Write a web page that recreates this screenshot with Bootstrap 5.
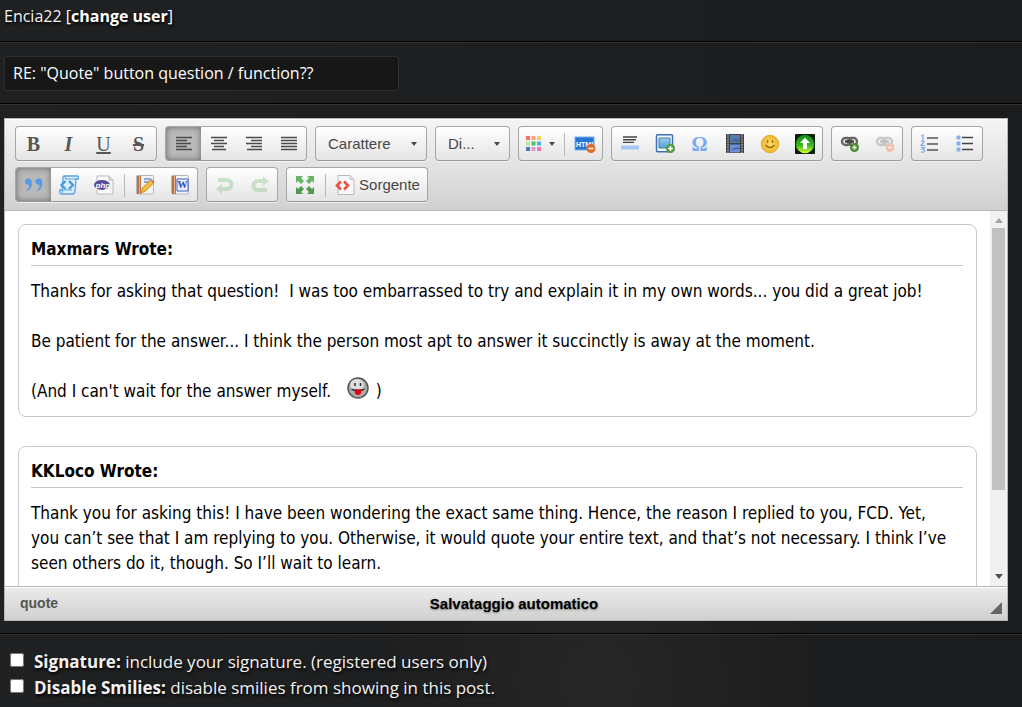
<!DOCTYPE html>
<html lang="it">
<head>
<meta charset="utf-8">
<meta name="viewport" content="width=device-width, initial-scale=1">
<title>Reply</title>
<link href="https://cdn.jsdelivr.net/npm/bootstrap@5.3.0/dist/css/bootstrap.min.css" rel="stylesheet">
<style>
body{background:radial-gradient(circle at 600px 680px,#282627 0,rgba(30,30,30,0) 220px),linear-gradient(90deg,#202122,#1b1c1d);color:#f2f2f2;font-family:"Open Sans","Noto Sans",sans-serif;font-size:16px;line-height:26px;min-height:100vh}
.post-row{border-bottom:1px solid #000;box-shadow:0 1px 0 #343434;padding:14px 14px 12px 4px}
.user-row{padding-top:3px;padding-bottom:12px;font-size:16px;text-shadow:1px 2px 3px #000}
.user-row a{color:#fff;text-decoration:none}
.subject{width:395px;max-width:100%;height:35px;background:#171717;border:1px solid #2e2e2e;border-radius:3px;color:#fff;padding:0 8px 2px;font-size:16px}
.editor{border:1px solid #b6b6b6;background:#fff;font-family:"Liberation Sans",sans-serif;color:#474747}
.tools{background:linear-gradient(#f5f5f5,#cfd1cf);border-bottom:1px solid #b6b6b6;padding:7px 10px 8px;gap:6px 8px;box-shadow:inset 0 1px 0 #fff}
.tool-set{display:flex;align-items:stretch;height:35px;border:1px solid #a6a6a6;border-bottom-color:#979797;border-radius:4px;background:linear-gradient(#fff,#e4e4e4);box-shadow:0 1px 0 rgba(255,255,255,.6);overflow:hidden}
.tool-set button{width:35px;border:0;padding:0;background:none;color:#474747;font-size:15px;display:flex;align-items:center;justify-content:center}
.tool-set button svg{width:20px;height:20px;flex:none}
.tool-set button.pressed{background:#b9b9b9;box-shadow:inset 0 0 6px rgba(0,0,0,.45)}
.tool-set button.faded svg{opacity:.3}
.tool-set button.color-tool{width:42px;gap:7px}
.tool-set button.color-tool svg{width:16px}
.tool-set button.source-tool{width:99px;gap:4px}
.tool-set .divide{width:1px;margin:6px 2px 4px 3px;background:#b9b9b9}
.caret-mark{border:3px solid transparent;border-top:4px solid #474747;border-bottom:0}
.glyph{font-family:"Liberation Serif",serif;font-size:20px;line-height:20px;color:#565656}
.glyph.omega{color:#79aaf1;font-weight:700}
.combo{position:relative}
.combo select{appearance:none;border:0;background:none;color:#474747;font-size:15px;padding:0 0 0 12px;width:110px}
.combo.short select{width:73px}
.combo .caret-mark{position:absolute;right:9px;top:15px;pointer-events:none}
.edit-area{height:375px}
.page-text{overflow:hidden;padding:13px;outline:0;color:#000;font-family:"DejaVu Sans Condensed","Noto Sans",sans-serif;font-size:17px;line-height:25px}
.quote-box{border:1px solid #c8c8c8;border-radius:8px;padding:12px 13px 12px 12px;margin-bottom:29px}
.quote-box h2{font-size:17px;font-weight:700;line-height:25px;margin:0 0 13px;padding-bottom:3px;border-bottom:1px solid #c8c8c8}
.quote-box p{margin:0 0 25px;padding-right:8px}
.quote-box p:last-child{margin:0}
.smiley{width:22px;height:22px;vertical-align:-2px;margin:-4px 2px 0 6px}
.scroller{width:17px;background:#f1f1f1;flex:none;padding:7px 2px 7px}
.scroller .thumb{width:13px;height:262px;background:#c1c1c1;margin-top:5px}
.scroller svg{width:8px;height:5px}
.status{height:34px;border-top:1px solid #b6b6b6;background:linear-gradient(#ebebeb,#cfd1cf);padding:0 5px 0 15px;box-shadow:inset 0 1px 0 #fff;font-weight:700;font-size:14px;line-height:34px}
.status .saved{color:#000;font-size:15px;padding-right:20px;text-shadow:0 1px 2px #777}
.status .path{color:#555;text-decoration:none;line-height:32px}
.status svg{width:12px;height:12px;margin:0 0 6px}
.options{padding:15px 10px;font-size:17px;text-shadow:1px 2px 3px #000}
.options label{display:flex;align-items:center;gap:10px;height:26px}
.options input{width:14px;height:14px;margin:0 0 4px;flex:none}
</style>
</head>
<body>
<svg width="0" height="0" class="position-absolute" aria-hidden="true">
<defs>
<linearGradient id="sky" x2="0" y2="1"><stop stop-color="#9bd0ef"/><stop offset="1" stop-color="#4fa0d8"/></linearGradient>
<linearGradient id="leaf" x2="0" y2="1"><stop stop-color="#118a1c"/><stop offset=".55" stop-color="#35b51d"/><stop offset="1" stop-color="#d8ff32"/></linearGradient>
<radialGradient id="sun"><stop stop-color="#ffe36a"/><stop offset="1" stop-color="#eeb52c"/></radialGradient>
<g id="chain" fill="none" stroke="#666" stroke-width="2.4"><rect x="2" y="4" width="9" height="7" rx="3.5"/><rect x="8" y="4" width="9" height="7" rx="3.5"/><path d="M5 7.500h9" stroke="#444"/></g>
<g id="notebook"><rect x="1.500" y=".5" width="17" height="18.500" rx="1" fill="#f2f3f8" stroke="#b1b5c2"/><path d="M2 1h4v18H2z" fill="#bd7348"/><path d="M4.500 1v18" stroke="#e6ae87"/></g>
</defs>
</svg>
<form>
<div class="post-row user-row">Encia22 <a href="#">[<b>change user</b>]</a></div>
<div class="post-row d-flex"><input class="subject" type="text" aria-label="Subject" value='RE: "Quote" button question / function??'></div>
<div class="post-row">
<div class="editor">
<div class="tools d-flex flex-wrap">
<div class="tool-set">
<button type="button" aria-label="Bold"><span class="glyph fw-bold">B</span></button>
<button type="button" aria-label="Italic"><span class="glyph fw-bold fst-italic">I</span></button>
<button type="button" aria-label="Underline"><span class="glyph text-decoration-underline">U</span></button>
<button type="button" aria-label="Strike"><span class="glyph fw-bold text-decoration-line-through">S</span></button>
</div>
<div class="tool-set">
<button type="button" class="pressed" aria-label="Left"><svg viewBox="0 0 20 20"><path d="M2 3.500h16M2 6.500h11M2 9.500h15M2 12.500h11M2 15.500h16" stroke="#4a4a4a" stroke-width="1.500"/></svg></button>
<button type="button" aria-label="Center"><svg viewBox="0 0 20 20"><path d="M2 3.500h16M5 6.500h10M2 9.500h16M5 12.500h10M3 15.500h14" stroke="#4a4a4a" stroke-width="1.500"/></svg></button>
<button type="button" aria-label="Right"><svg viewBox="0 0 20 20"><path d="M2 3.500h16M7 6.500h11M2 9.500h16M7 12.500h11M3 15.500h15" stroke="#4a4a4a" stroke-width="1.500"/></svg></button>
<button type="button" aria-label="Justify"><svg viewBox="0 0 20 20"><path d="M2 3.500h16M2 6.500h16M2 9.500h16M2 12.500h16M2 15.500h16" stroke="#4a4a4a" stroke-width="1.500"/></svg></button>
</div>
<div class="tool-set combo"><select aria-label="Carattere"><option>Carattere</option></select><span class="caret-mark"></span></div>
<div class="tool-set combo short"><select aria-label="Dimensione"><option>Di...</option></select><span class="caret-mark"></span></div>
<div class="tool-set">
<button type="button" class="color-tool" aria-label="Color"><svg viewBox="0 0 16 20"><path fill="#f56f6b" d="M0 2h4v4H0z"/><path fill="#f8a36d" d="M5.500 2h4v4h-4z"/><path fill="#efd35d" d="M11 2h4v4h-4z"/><path fill="#bfe5a0" d="M0 7.500h4v4H0z"/><path fill="#45c957" d="M5.500 7.500h4v4h-4z"/><path fill="#4eb0ef" d="M11 7.500h4v4h-4z"/><path fill="#5572b1" d="M0 13h4v4H0z"/><path fill="#d899dc" d="M5.500 13h4v4h-4z"/><path fill="#fb73b2" d="M11 13h4v4h-4z"/></svg><span class="caret-mark"></span></button>
<span class="divide"></span>
<button type="button" aria-label="Remove format"><svg viewBox="0 0 20 20" overflow="visible"><rect x="0" y="3" width="19" height="13" fill="#2874d4" stroke="#7bb2ed"/><text x="1" y="12.500" font-size="7" font-weight="bold" fill="#fff" font-family="Liberation Sans">HTML</text><circle cx="16" cy="14.500" r="4.500" fill="#e36a20"/><path d="M13.500 14.500h5" stroke="#fff" stroke-width="1.500"/></svg></button>
</div>
<div class="tool-set">
<button type="button" aria-label="Horizontal line"><svg viewBox="0 0 20 20"><path d="M3 3h14M3 5.700h13M3 8.400h11" stroke="#444" stroke-width="1.400"/><path d="M1 11.500h18v4H1z" fill="#a7c6f3"/></svg></button>
<button type="button" aria-label="Image"><svg viewBox="0 0 20 20"><rect x="1.500" y=".8" width="16" height="17" rx="1" fill="#eef6fc" stroke="#416eae" stroke-width="1.500"/><path d="M4 4h11v10H4z" fill="url(#sky)" stroke="#477fae"/><circle cx="15.500" cy="14.500" r="4.500" fill="#559b3c"/><path d="M13 14.500h5M15.500 12v5" stroke="#fff" stroke-width="1.500"/></svg></button>
<button type="button" aria-label="Symbol"><span class="glyph omega">Ω</span></button>
<button type="button" aria-label="Video"><svg viewBox="0 0 20 20"><path d="M1 0h18v19H1z" fill="#414141"/><path d="M5 1h10v8H5z" fill="#597cae"/><path d="M5 10.500h10v8H5z" fill="#6d8ed8"/><path d="m5 7 5-3 5 1v3H5zM5 16l4-2 6-1v2z" fill="#48699e"/><path d="M3 0v19M17 0v19" stroke="#a5a5a5" stroke-width="1.500" stroke-dasharray="1.500 1"/></svg></button>
<button type="button" aria-label="Smiley"><svg viewBox="0 0 20 20"><circle cx="10" cy="10" r="8.700" fill="url(#sun)" stroke="#e6ac31"/><path d="M5.500 11q4.500 5 9 0" fill="none" stroke="#986c11" stroke-width="1.500"/><path d="M7.500 6v3M12.500 6v3" stroke="#9b711b" stroke-width="1.500"/></svg></button>
<button type="button" aria-label="Upload"><svg viewBox="0 0 20 20"><rect width="20" height="20" rx="1" fill="#071e09"/><circle cx="10" cy="10" r="9.200" fill="url(#leaf)"/><path d="m10 3.500 5 5.500h-3v6H8V9H5z" fill="#fff"/></svg></button>
</div>
<div class="tool-set">
<button type="button" aria-label="Link"><svg viewBox="0 0 20 20"><use href="#chain"/><circle cx="14.500" cy="13.500" r="4.500" fill="#4d8e36"/><path d="M12.500 13.500h4M14.500 11.500v4" stroke="#fff" stroke-width="1.500"/></svg></button>
<button type="button" class="faded" aria-label="Unlink"><svg viewBox="0 0 20 20"><use href="#chain"/><circle cx="15" cy="13.500" r="4.500" fill="#ee641c"/><path d="M13 13.500h4" stroke="#fff" stroke-width="1.500"/></svg></button>
</div>
<div class="tool-set">
<button type="button" aria-label="Numbered list"><svg viewBox="0 0 20 20"><path d="M7 4h11M7 10h11M7 16h11" stroke="#555" stroke-width="1.400"/><g fill="none" stroke="#79a9ed" stroke-width="1.200"><path d="M1.500 2 3 1v5M1 7.500q3-1.500 3 .5L1 11.500h4M1 13.500h3.500l-2 2q2 0 2 1.500-1 2-3.500.8"/></g></svg></button>
<button type="button" aria-label="Bulleted list"><svg viewBox="0 0 20 20"><path d="M7 3.500h11M7 9.500h11M7 15.500h11" stroke="#444" stroke-width="1.400"/><g fill="#86b1ef"><rect x="1.500" y="1.500" width="4" height="4" rx="1"/><rect x="1.500" y="7.500" width="4" height="4" rx="1"/><rect x="1.500" y="13.500" width="4" height="4" rx="1"/></g></svg></button>
</div>
<div class="tool-set">
<button type="button" class="pressed" aria-label="Quote"><svg viewBox="0 0 20 20"><path d="M1 7a3.300 3.300 0 1 1 6.700-.5Q8.800 13 3.500 16l-1-.8q3-2 2.600-5.400Q1.500 10 1 7zM11.500 7a3.300 3.300 0 1 1 6.700-.5q1.100 6.500-4.200 9.500l-1-.8q3-2 2.600-5.400Q12 10 11.500 7z" fill="#559ae8"/></svg></button>
<button type="button" aria-label="Code"><svg viewBox="0 0 20 20"><path d="M5 1h13q2 0 1.500 3H17l-1 12q0 3-3 3H2q-2-1-1-4h2L4 3q0-2 1-2z" fill="#dceefc" stroke="#5da1dd" stroke-width="1.300"/><path d="M5 1q2 0 1.500 3H17M2 19q2-1 1.500-4H13" fill="none" stroke="#5da1dd"/><path d="m6.500 6-4 4 4 4M10 6l4 4-4 4" fill="none" stroke="#4a9be0" stroke-width="2.400"/></svg></button>
<button type="button" aria-label="PHP"><svg viewBox="0 0 20 20"><path d="M3 1h12l4 4v14H3z" fill="#fafafa" stroke="#b8b8c2"/><path d="M15 1v4h4" fill="#ddd" stroke="#b8b8c2"/><ellipse cx="8" cy="10" rx="8" ry="5" fill="#554ca0"/><text x="1.500" y="12.500" font-size="8" font-weight="bold" font-style="italic" fill="#fff" font-family="Liberation Sans">php</text></svg></button>
<span class="divide"></span>
<button type="button" aria-label="Paste text"><svg viewBox="0 0 20 20"><use href="#notebook"/><path d="M9 4h7M9 7h7" stroke="#6a91d9" stroke-width="1.500"/><path d="m6 18 1.500-5 8-8 3 3-8 8z" fill="#f5c13c" stroke="#c68624"/><path d="m15.500 5 3 3 1-1-3-3z" fill="#df6b55"/></svg></button>
<button type="button" aria-label="Paste from Word"><svg viewBox="0 0 20 20"><use href="#notebook"/><path d="M7 4h11v12H7z" fill="#eaf0ff" stroke="#3d62c9"/><text x="7.500" y="13" font-size="10" font-weight="bold" fill="#2749ba" font-family="Liberation Serif">W</text></svg></button>
</div>
<div class="tool-set">
<button type="button" class="faded" aria-label="Undo"><svg viewBox="0 0 20 20"><path d="M3 5h9a4.500 4.500 0 0 1 0 9H6" fill="none" stroke="#68b566" stroke-width="4"/><path d="m7 9-6 5 6 5z" fill="#68b566"/></svg></button>
<button type="button" class="faded" aria-label="Redo"><svg viewBox="0 0 20 20"><path d="M17 15H8a4.500 4.500 0 0 1 0-9h6" fill="none" stroke="#68b566" stroke-width="4"/><path d="m13 1 6 5-6 5z" fill="#68b566"/></svg></button>
</div>
<div class="tool-set">
<button type="button" aria-label="Maximize"><svg viewBox="0 0 20 20"><g fill="#68b566"><path id="corner" d="M1 1h7L6 3l3 3-3 3-3-3-2 2z"/><use href="#corner" transform="matrix(-1 0 0 1 20 0)"/></g><g fill="#4f9b4e"><path id="foot" d="M1 19h7l-2-2 3-3-3-3-3 3-2-2z"/><use href="#foot" transform="matrix(-1 0 0 1 20 0)"/></g></svg></button>
<span class="divide"></span>
<button type="button" class="source-tool"><svg viewBox="0 0 20 20"><path d="M3 .500h12l4 4v15H3z" fill="#f8f8f8" stroke="#b9b9b9"/><path d="M15 .500v4h4" fill="#ddd" stroke="#c8c8c8"/><path d="m6 6.500-4 4 4 4M9 6.500l4 4-4 4" fill="none" stroke="#ed4f45" stroke-width="2.600"/></svg>Sorgente</button>
</div>
</div>
<div class="edit-area d-flex">
<div class="page-text flex-grow-1" contenteditable="true" role="textbox" aria-label="Message" spellcheck="false">
<section class="quote-box"><h2>Maxmars Wrote:</h2>
<p>Thanks for asking that question!&nbsp; I was too embarrassed to try and explain it in my own words... you did a great job!</p>
<p>Be patient for the answer... I think the person most apt to answer it succinctly is away at the moment.</p>
<p>(And I can't wait for the answer myself. &nbsp;<svg class="smiley" viewBox="0 0 22 22"><circle cx="11" cy="11" r="10" fill="#aaa" stroke="#555" stroke-width="1.500"/><ellipse cx="10" cy="8" rx="7" ry="6" fill="#ddd"/><path d="M8 6v3M13.500 6v3" stroke="#333" stroke-width="1.500"/><path d="M4 11.500q7 2 14 0-1 3-7 3t-7-3z" fill="#333"/><path d="M8 12.500h6v4q-3 3-6 0z" fill="#e9000b"/></svg> )</p></section>
<section class="quote-box"><h2>KKLoco Wrote:</h2>
<p>Thank you for asking this! I have been wondering the exact same thing. Hence, the reason I replied to you, FCD. Yet, you can’t see that I am replying to you. Otherwise, it would quote your entire text, and that’s not necessary. I think I’ve seen others do it, though. So I’ll wait to learn.</p><p><br></p></section>
</div>
<div class="scroller d-flex flex-column align-items-center"><svg viewBox="0 0 8 5"><path d="m0 5 4-5 4 5z" fill="#a3a3a3"/></svg><div class="thumb"></div><svg class="mt-auto" viewBox="0 0 8 5"><path d="m0 0 4 5 4-5z" fill="#505050"/></svg></div>
</div>
<div class="status d-flex"><a href="#" class="path">quote</a><span class="saved flex-grow-1 text-center">Salvataggio automatico</span><svg class="align-self-end" viewBox="0 0 12 12"><path d="M12 0v12H0z" fill="#666"/></svg></div>
</div>
</div>
<div class="options">
<label><input type="checkbox"><span><b>Signature:</b> include your signature. (registered users only)</span></label>
<label><input type="checkbox"><span><b>Disable Smilies:</b> disable smilies from showing in this post.</span></label>
</div>
</form>
<script src="https://cdn.jsdelivr.net/npm/bootstrap@5.3.0/dist/js/bootstrap.bundle.min.js"></script>
</body>
</html>
